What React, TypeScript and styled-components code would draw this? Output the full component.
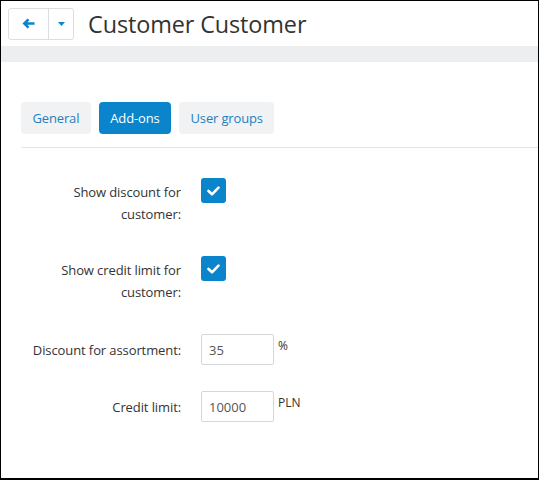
import React from "react";
import styled, { createGlobalStyle } from "styled-components";

const GlobalStyle = createGlobalStyle`
  html, body {
    margin: 0;
    padding: 0;
    background: #ffffff;
  }
  body {
    font-family: "Open Sans", "Noto Sans", sans-serif;
    color: #333333;
  }
`;

const Frame = styled.div`
  position: relative;
  width: 539px;
  height: 480px;
  box-sizing: border-box;
  border: 1px solid #000000;
  border-bottom-width: 2px;
  background: #ffffff;
  overflow: hidden;
`;

const TopIndicator = styled.div`
  position: absolute;
  top: -1px;
  left: 223px;
  width: 106px;
  height: 1px;
  background: #2fa4d8;
`;

const Header = styled.header`
  display: flex;
  align-items: center;
  height: 45px;
  padding: 0 7px;
  box-sizing: border-box;
`;

const BtnGroup = styled.div`
  display: flex;
  height: 32px;
  border: 1px solid #dcdfe1;
  border-radius: 3px;
  box-sizing: border-box;
  background: #ffffff;
`;

const GroupButton = styled.button<{ $width: number; $divider?: boolean }>`
  display: flex;
  align-items: center;
  justify-content: center;
  width: ${(p) => p.$width}px;
  height: 100%;
  padding: 0;
  border: none;
  border-right: ${(p) => (p.$divider ? "1px solid #dcdfe1" : "none")};
  background: transparent;
  cursor: pointer;
`;

const Title = styled.h1`
  margin: 0 0 0 14px;
  font-size: 23.4px;
  font-weight: 400;
  color: #333333;
  letter-spacing: -0.1px;
`;

const Band = styled.div`
  height: 16px;
  background: #eceeef;
`;

const Content = styled.main`
  padding: 40px 0 0 20px;
`;

const Tabs = styled.nav`
  display: flex;
  gap: 8px;
  padding-bottom: 13px;
  border-bottom: 1px solid #e3e5e7;
`;

const Tab = styled.button<{ $active?: boolean }>`
  height: 32px;
  padding: 0 11.5px;
  border: none;
  border-radius: 4px;
  font-family: inherit;
  font-size: 13px;
  letter-spacing: -0.15px;
  background: ${(p) => (p.$active ? "#0a85cb" : "#f1f2f3")};
  color: ${(p) => (p.$active ? "#ffffff" : "#1f7fc0")};
  cursor: pointer;
`;

const Form = styled.div`
  padding-top: 30px;
`;

const Row = styled.div<{ $align: "start" | "center" }>`
  display: grid;
  grid-template-columns: 160px auto;
  column-gap: 20px;
  align-items: ${(p) => p.$align};
  margin-bottom: 26px;
`;

const Label = styled.label<{ $pad?: boolean }>`
  text-align: right;
  font-size: 13px;
  line-height: 22px;
  letter-spacing: -0.1px;
  color: #333333;
  padding: ${(p) => (p.$pad ? "3px 0 5px" : "0")};
`;

const CheckBox = styled.span`
  display: flex;
  align-items: center;
  justify-content: center;
  width: 25px;
  height: 25px;
  border-radius: 3px;
  background: #0a85cb;
`;

const Field = styled.div`
  display: flex;
  align-items: flex-start;
  gap: 4px;
`;

const Input = styled.input`
  width: 73px;
  height: 31px;
  box-sizing: border-box;
  padding: 0 7px;
  border: 1px solid #d5d8da;
  border-radius: 2px;
  font-family: inherit;
  font-size: 13px;
  color: #555555;
  outline: none;
`;

const Unit = styled.span`
  font-size: 12px;
  line-height: 12px;
  padding-top: 6px;
  color: #333333;
`;

const ArrowLeft = () => (
  <svg width="13" height="11" viewBox="0 0 13 11">
    <path
      d="M5.6 0.4 L0.5 5.5 L5.6 10.6 L7.4 8.8 L5.4 6.8 H12.5 V4.2 H5.4 L7.4 2.2 Z"
      fill="#0a85cb"
    />
  </svg>
);

const Caret = () => (
  <svg width="7" height="4" viewBox="0 0 7 4">
    <path d="M0 0 H7 L3.5 4 Z" fill="#0a85cb" />
  </svg>
);

const Check = () => (
  <svg width="13" height="10" viewBox="0 0 13 10">
    <path
      d="M1.5 5 L5 8.3 L11.5 1.7"
      fill="none"
      stroke="#ffffff"
      strokeWidth="2.6"
      strokeLinecap="round"
      strokeLinejoin="round"
    />
  </svg>
);

export default function App() {
  return (
    <>
      <GlobalStyle />
      <Frame>
        <TopIndicator />
        <Header>
          <BtnGroup>
            <GroupButton $width={40} $divider>
              <ArrowLeft />
            </GroupButton>
            <GroupButton $width={24}>
              <Caret />
            </GroupButton>
          </BtnGroup>
          <Title>Customer Customer</Title>
        </Header>
        <Band />
        <Content>
          <Tabs>
            <Tab>General</Tab>
            <Tab $active>Add-ons</Tab>
            <Tab>User groups</Tab>
          </Tabs>
          <Form>
            <Row $align="start">
              <Label $pad>Show discount for customer:</Label>
              <CheckBox>
                <Check />
              </CheckBox>
            </Row>
            <Row $align="start">
              <Label $pad>Show credit limit for customer:</Label>
              <CheckBox>
                <Check />
              </CheckBox>
            </Row>
            <Row $align="center">
              <Label>Discount for assortment:</Label>
              <Field>
                <Input defaultValue="35" />
                <Unit>%</Unit>
              </Field>
            </Row>
            <Row $align="center">
              <Label>Credit limit:</Label>
              <Field>
                <Input defaultValue="10000" />
                <Unit>PLN</Unit>
              </Field>
            </Row>
          </Form>
        </Content>
      </Frame>
    </>
  );
}
